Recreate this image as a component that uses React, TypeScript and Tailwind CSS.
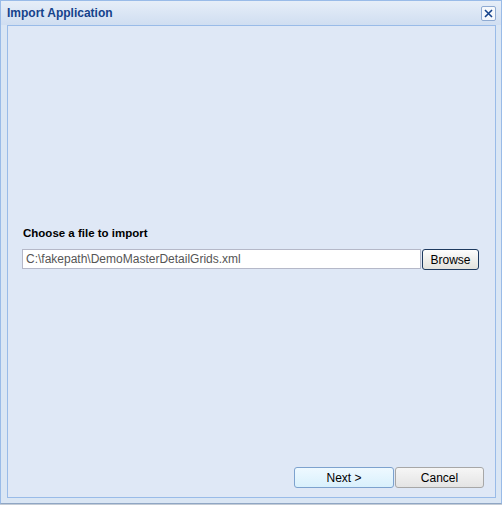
import React from 'react';

export default function App() {
  const font = { fontFamily: '"Liberation Sans", Arial, sans-serif' };
  return (
    <div className="w-[502px] h-[506px] bg-white" style={font}>
      <div className="w-[502px] h-[504px] border border-[#99bbe8] border-b-[#8fa6c4] bg-[#d3e1f1] flex flex-col shadow-[0_1px_0_#c4ccd6]">
        {/* title bar */}
        <div className="h-[24px] shrink-0 flex items-center justify-between pl-[6px] pr-[5px] bg-gradient-to-b from-[#e6eef8] to-[#d0def1]">
          <span className="text-[12px] leading-[14px] font-bold text-[#15428b]">Import Application</span>
          <button className="w-[15px] h-[15px] border border-[#8eaad2] rounded-[2px] bg-white/70 flex items-center justify-center">
            <svg width="9" height="9" viewBox="0 0 9 9">
              <path d="M1 1 L8 8 M8 1 L1 8" stroke="#15428b" strokeWidth="1.6" />
            </svg>
          </button>
        </div>
        {/* body */}
        <div className="flex-1 pl-[6px] pr-[5px] pb-[5px] bg-[#dae6f4]">
          <div className="h-full border border-[#99bbe8] bg-[#dfe8f6] flex flex-col">
            <div className="pt-[200px] pl-[14px]">
              <div className="text-[11.5px] leading-[14px] font-bold text-black mb-[9px] pl-[1px]">
                Choose a file to import
              </div>
              <div className="flex gap-[1px] items-start">
                <div className="w-[399px] h-[20px] border border-[#b5b8c8] bg-white text-[12px] text-[#555] pl-[3px] flex items-center">
                  C:\fakepath\DemoMasterDetailGrids.xml
                </div>
                <button className="w-[57px] h-[21px] border border-[#1e3a5f] rounded-[3px] text-[12px] text-black bg-gradient-to-b from-[#fdfdfd] to-[#e2e2dd]">
                  Browse
                </button>
              </div>
            </div>
            <div className="mt-auto flex justify-end gap-[1px] pr-[11px] pb-[9px]">
              <button className="w-[100px] h-[21px] border border-[#7da2ce] rounded-[3px] text-[12px] text-black bg-gradient-to-b from-[#eef9ff] to-[#d9f0fc]">
                Next &gt;
              </button>
              <button className="w-[89px] h-[21px] border border-[#a7a7a7] rounded-[3px] text-[12px] text-black bg-gradient-to-b from-[#f6f6f6] to-[#e4e4e4]">
                Cancel
              </button>
            </div>
          </div>
        </div>
      </div>
    </div>
  );
}
